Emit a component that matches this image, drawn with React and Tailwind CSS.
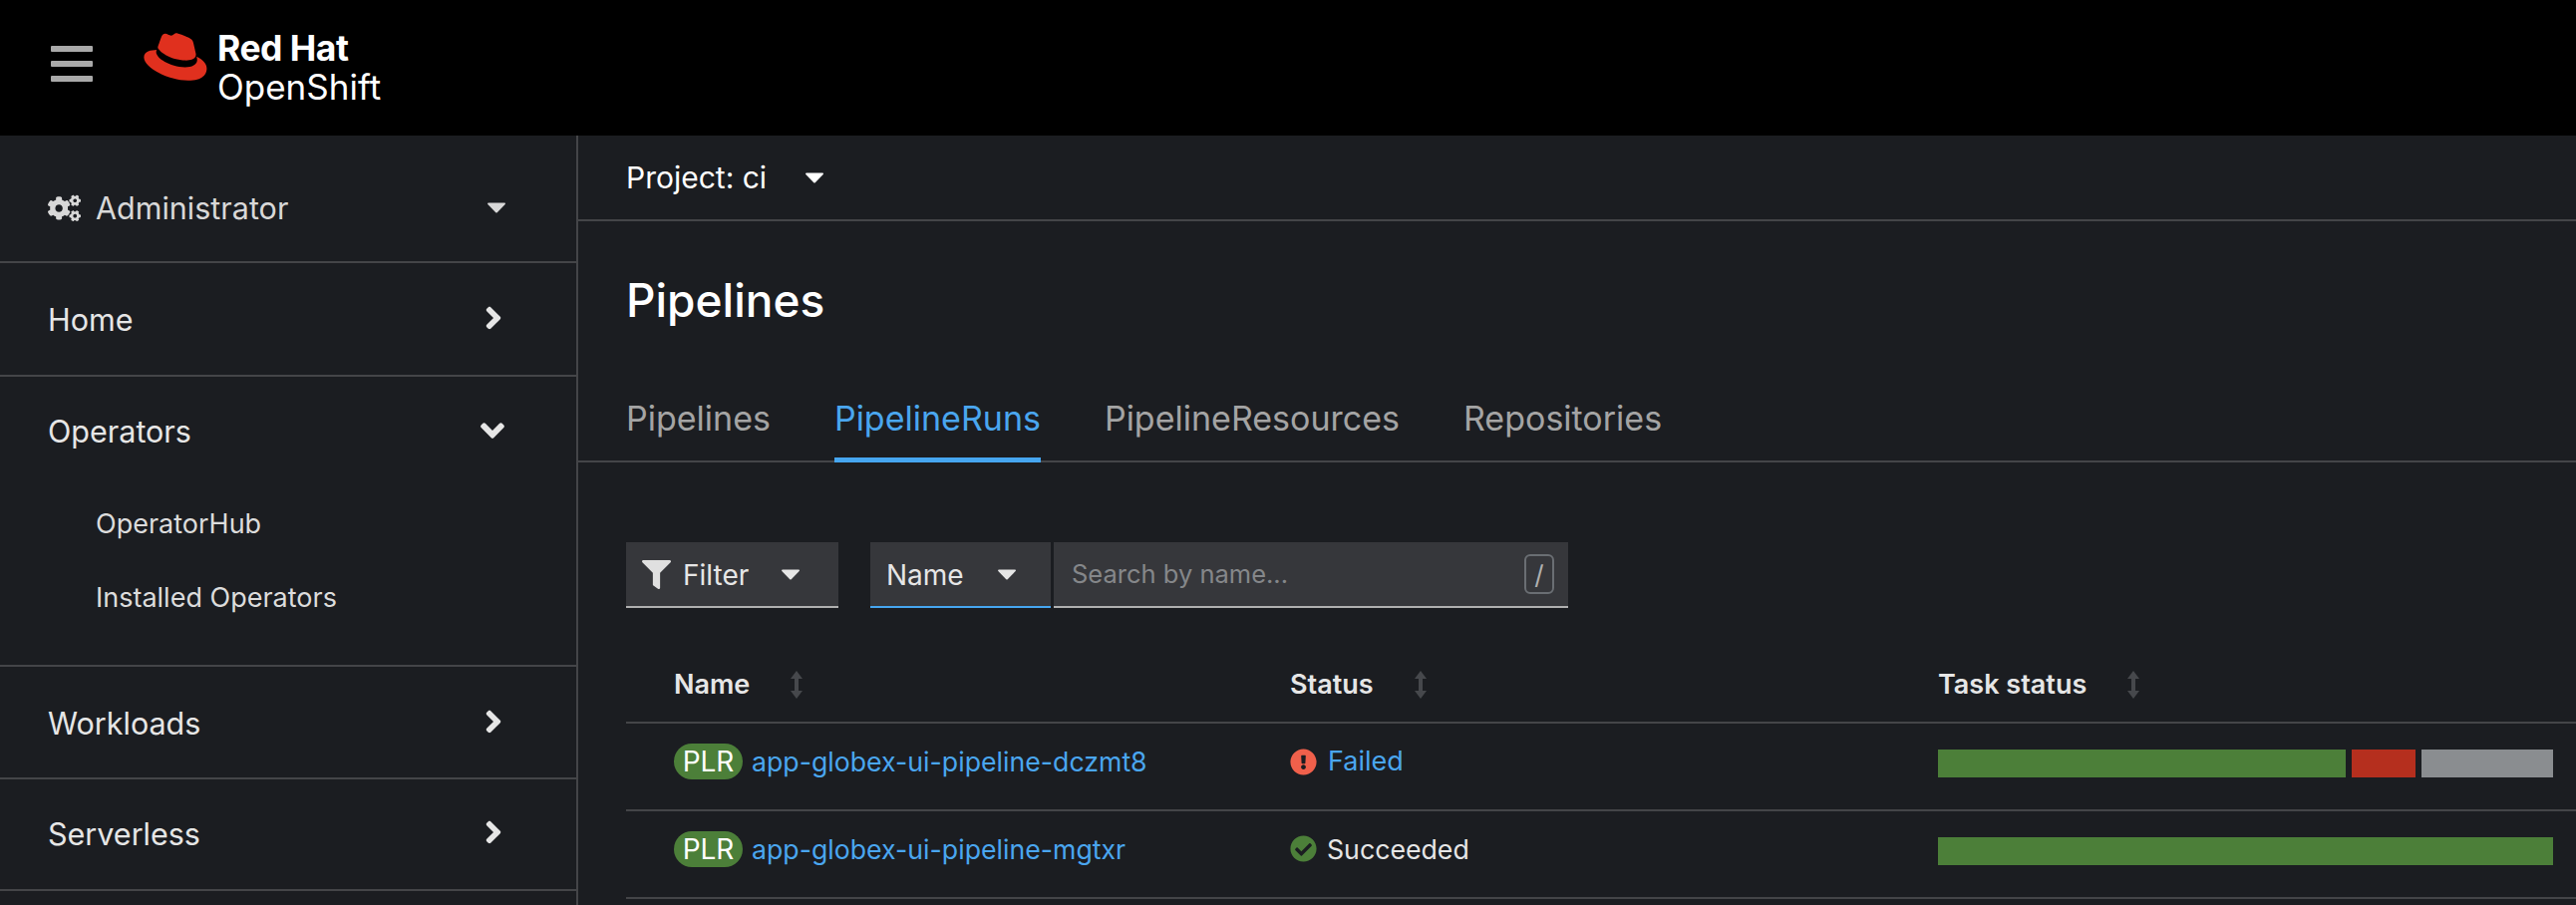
import { FaCogs, FaAngleRight, FaAngleDown, FaFilter, FaExclamationCircle, FaCheckCircle } from 'react-icons/fa'

function Caret({ className }) {
  return (
    <svg className={className} width="18" height="11" viewBox="0 0 18 11" fill="currentColor">
      <path d="M1 0.5h16c.8 0 1.2.9.7 1.5L9.7 10.2c-.4.4-1 .4-1.4 0L.3 2C-.2 1.4.2.5 1 .5z" />
    </svg>
  )
}

function SortIcon() {
  return (
    <svg width="14" height="28" viewBox="0 0 14 28" fill="#46484c" className="shrink-0">
      <path d="M7 0l6 8H9v12h4l-6 8-6-8h4V8H1z" />
    </svg>
  )
}

function NavItem({ label, className }) {
  return (
    <div className={`${className} pl-[48px] pr-[65px] flex items-center justify-between border-b-2 border-[#444548] text-[30.5px] text-[#e6e6e6]`}>
      <span>{label}</span>
      <FaAngleRight className="text-[#e6e6e6] w-[36px] h-[36px] -mt-[4px]" />
    </div>
  )
}

function Plr({ name }) {
  return (
    <div className="flex items-center">
      <span className="w-[69px] h-[36px] rounded-[18px] bg-[#4c7f39] text-white text-[28px] flex items-center justify-center">PLR</span>
      <a className="ml-[9px] text-[#4aa6ef] text-[26.7px]">{name}</a>
    </div>
  )
}

function HeaderCell({ label }) {
  return (
    <div className="pl-[48px] pt-[40px] flex items-center gap-[40px] font-semibold text-[27px] text-[#e6e6e6]">
      <span>{label}</span>
      <SortIcon />
    </div>
  )
}

function App() {
  const tabs = ['Pipelines', 'PipelineRuns', 'PipelineResources', 'Repositories']

  return (
    <div className="h-screen overflow-hidden bg-[#1b1d21] flex flex-col font-['Inter','Liberation_Sans',sans-serif]">
      <header className="h-[136px] shrink-0 bg-black flex items-center">
        <svg width="42" height="36" viewBox="0 0 42 36" className="ml-[51px] -mt-[8px]" fill="#a9a9a9">
          <rect x="0" y="0" width="42" height="6" rx="1" />
          <rect x="0" y="15" width="42" height="6" rx="1" />
          <rect x="0" y="30" width="42" height="6" rx="1" />
        </svg>
        <svg width="64" height="48" viewBox="0 0 192 145" className="ml-[51px] -mt-[22px]" fill="#e0301e">
          <path d="M127.47,83.49c12.51,0,30.61-2.58,30.61-17.46a14,14,0,0,0-.31-3.42l-7.45-32.36c-1.72-7.12-3.23-10.35-15.73-16.6C124.89,8.69,103.76.5,97.51.5,91.69.5,90,8,83.06,8c-6.68,0-11.64-5.6-17.89-5.6-6,0-9.91,4.09-12.93,12.5,0,0-8.41,23.72-9.49,27.16A6.43,6.43,0,0,0,42.53,44c0,9.22,36.3,39.45,84.94,39.45M160,72.07c1.73,8.19,1.73,9.05,1.73,10.13,0,14-15.74,21.77-36.43,21.77C78.54,104,37.58,76.6,37.58,58.49a18.45,18.45,0,0,1,1.51-7.33C22.27,52,.5,55,.5,74.22c0,31.48,74.59,70.28,133.65,70.28,45.28,0,56.7-20.48,56.7-36.65,0-12.72-11-27.16-30.83-35.78" />
        </svg>
        <div className="ml-[10px] text-white flex flex-col gap-[2px]">
          <span className="text-[35.5px] leading-[36px] font-bold tracking-[-0.5px]">Red Hat</span>
          <span className="text-[35px] leading-[36px] font-normal">OpenShift</span>
        </div>
      </header>

      <div className="flex-1 flex min-h-0">
        <aside className="w-[580px] shrink-0 border-r-2 border-[#444548]">
          <div className="h-[128px] pl-[48px] pr-[71px] pt-[19px] flex items-center justify-between border-b-2 border-[#444548] text-[#d8d8d8]">
            <div className="flex items-center gap-[15px] text-[30.5px]">
              <FaCogs className="w-[33px] h-[28px]" />
              <span>Administrator</span>
            </div>
            <Caret />
          </div>
          <NavItem label="Home" className="h-[114px] pt-[1px]" />
          <div className="h-[291px] border-b-2 border-[#444548]">
            <div className="h-[113px] pl-[48px] pr-[65px] pb-[3px] flex items-center justify-between text-[30.5px] text-[#e6e6e6]">
              <span>Operators</span>
              <FaAngleDown className="w-[38px] h-[38px] -mt-[3px]" />
            </div>
            <div className="pl-[96px] pt-[17px] text-[27px] text-[#dcdcdc] flex flex-col gap-[38px]">
              <span className="leading-[36px]">OperatorHub</span>
              <span className="leading-[36px]">Installed Operators</span>
            </div>
          </div>
          <NavItem label="Workloads" className="h-[113px] pt-[2px]" />
          <NavItem label="Serverless" className="h-[112px]" />
        </aside>

        <main className="flex-1 min-w-0">
          <div className="h-[86px] pl-[48px] flex items-center gap-[39px] border-b-2 border-[#444548] text-white text-[30px]">
            <span>Project: ci</span>
            <Caret />
          </div>

          <h1 className="pl-[48px] pt-[51px] text-[46px] leading-[56px] font-medium text-white">Pipelines</h1>

          <nav className="mt-[44px] h-[91px] pl-[48px] flex gap-[64px] border-b-2 border-[#444548] text-[34px]">
            {tabs.map((tab) => (
              <div
                key={tab}
                className={tab === 'PipelineRuns'
                  ? 'h-[91px] pt-[21px] border-b-[5px] border-[#46a6f0] text-[#4aa6ef]'
                  : 'h-[89px] pt-[21px] text-[#a4a4a4]'}
              >
                {tab}
              </div>
            ))}
          </nav>

          <div className="pl-[48px] pt-[80px] flex">
            <div className="w-[213px] h-[66px] pt-[1px] bg-[#36373b] border-b-2 border-[#b0b0b0] flex items-center pl-[16px] text-[28px] text-[#e6e6e6]">
              <FaFilter className="w-[29px] h-[29px] text-[#e0e0e0]" />
              <span className="ml-[12px]">Filter</span>
              <Caret className="ml-[33px]" />
            </div>
            <div className="ml-[32px] w-[181px] h-[66px] pt-[1px] bg-[#36373b] border-b-2 border-[#46a6f0] flex items-center pl-[16px] text-[28px] text-[#e6e6e6]">
              <span>Name</span>
              <Caret className="ml-[34px]" />
            </div>
            <div className="ml-[3px] w-[516px] h-[66px] bg-[#36373b] border-b-2 border-[#b0b0b0] flex items-center pl-[18px] pr-[14px]">
              <input
                readOnly
                placeholder="Search by name..."
                className="flex-1 min-w-0 bg-transparent text-[25.5px] placeholder:text-[#85878a] outline-none"
              />
              <span className="w-[30px] h-[40px] rounded-md border-2 border-[#6a6e73] text-[#b0b0b0] text-[26px] flex items-center justify-center">/</span>
            </div>
          </div>

          <div className="ml-[48px]">
            <div className="h-[116px] grid grid-cols-[618px_650px_1fr] border-b-2 border-[#444548]">
              <HeaderCell label="Name" />
              <HeaderCell label="Status" />
              <HeaderCell label="Task status" />
            </div>

            <div className="h-[88px] grid grid-cols-[618px_650px_1fr] items-center border-b-2 border-[#444548]">
              <div className="pl-[48px] pb-[10px]"><Plr name="app-globex-ui-pipeline-dczmt8" /></div>
              <div className="pl-[48px] pb-[10px] flex items-center text-[27px] text-[#4aa6ef]">
                <FaExclamationCircle className="w-[27px] h-[27px] text-[#f0604b]" />
                <span className="ml-[11px]">Failed</span>
              </div>
              <div className="pl-[48px] pr-[23px] pb-[6px] flex gap-[6px]">
                <div className="h-[28px] w-[409px] bg-[#4c7f39]" />
                <div className="h-[28px] w-[64px] bg-[#b52f1e]" />
                <div className="h-[28px] flex-1 bg-[#8a8d90]" />
              </div>
            </div>

            <div className="h-[88px] grid grid-cols-[618px_650px_1fr] items-center border-b-2 border-[#444548]">
              <div className="pl-[48px] pb-[10px]"><Plr name="app-globex-ui-pipeline-mgtxr" /></div>
              <div className="pl-[48px] pb-[10px] flex items-center text-[26.7px] text-[#e6e6e6]">
                <FaCheckCircle className="w-[27px] h-[27px] text-[#4c7f39]" />
                <span className="ml-[10px]">Succeeded</span>
              </div>
              <div className="pl-[48px] pr-[23px] pb-[6px]">
                <div className="h-[28px] bg-[#4c7f39]" />
              </div>
            </div>
          </div>
        </main>
      </div>
    </div>
  )
}

export default App
